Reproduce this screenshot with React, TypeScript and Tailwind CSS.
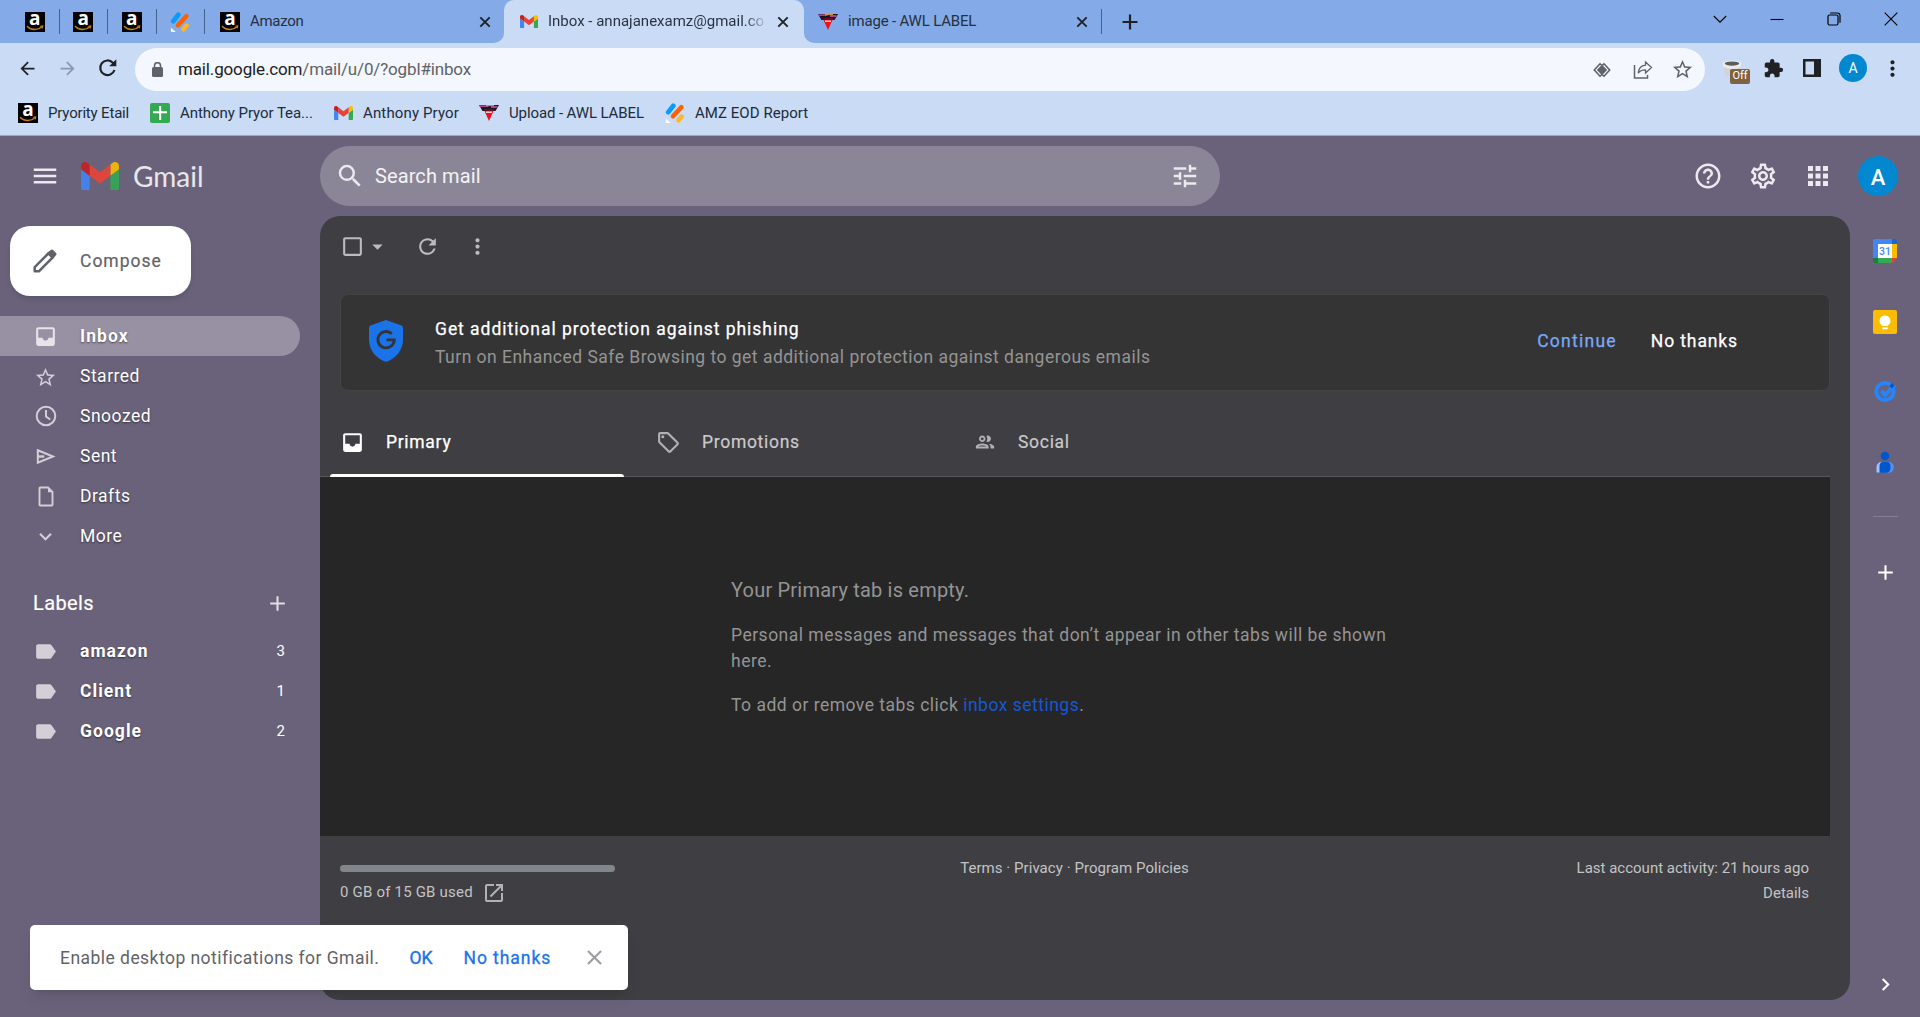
import type { ReactNode } from "react";
import {
  MdAdd,
  MdApps,
  MdArrowBack,
  MdArrowDropDown,
  MdArrowForward,
  MdCheckBoxOutlineBlank,
  MdChevronRight,
  MdClose,
  MdExtension,
  MdHelpOutline,
  MdKeyboardArrowDown,
  MdLabel,
  MdMenu,
  MdMoreVert,
  MdOpenInNew,
  MdOutlineGroup,
  MdOutlineLocalOffer,
  MdOutlineSettings,
  MdRefresh,
  MdSearch,
  MdStarBorder,
  MdTune,
} from "react-icons/md";

function AmazonIcon() {
  return (
    <span className="relative flex h-5 w-5 shrink-0 justify-center bg-black font-['Open_Sans',sans-serif] text-[19px] leading-[13px] font-bold text-white">
      a
      <svg className="absolute inset-0" width="20" height="20" viewBox="0 0 20 20" fill="none">
        <path d="M2 14.2c4.600 4.400 10.800 4.400 15 .6" stroke="#c77e1c" strokeWidth="1.500" />
        <path d="M15.200 14.200l2.600-.3-.6 2.500" stroke="#c77e1c" strokeWidth="1.100" />
      </svg>
    </span>
  );
}

function JotformIcon() {
  return (
    <svg className="shrink-0" width="20" height="20" viewBox="0 0 20 20" strokeLinecap="round">
      <path d="M3.200 9.200L8.300 2.800" stroke="#0a99ff" strokeWidth="4.600" />
      <path d="M8 13.200l8.300-8.900" stroke="#ff6100" strokeWidth="4.600" />
      <path d="M13.500 17.200l3-3.600" stroke="#ffb629" strokeWidth="4.600" />
      <path d="M.8 15.500l4.900 4.500H1.800a1 1 0 0 1-1-1z" fill="#fff" />
    </svg>
  );
}

function GmailIcon({ width }: { width: number }) {
  return (
    <svg className="shrink-0" width={width} height={width * 0.75} viewBox="52 42 88 66">
      <path fill="#4285f4" d="M58 108h14V74L52 59v43c0 3.320 2.690 6 6 6" />
      <path fill="#34a853" d="M120 108h14c3.320 0 6-2.690 6-6V59l-20 15" />
      <path fill="#fbbc04" d="M120 48v26l20-15v-8c0-7.420-8.470-11.650-14.400-7.200" />
      <path fill="#ea4335" d="M72 74V48l24 18 24-18v26L96 92" />
      <path fill="#c5221f" d="M52 51v8l20 15V48l-5.600-4.200c-5.940-4.450-14.400-.22-14.400 7.200" />
    </svg>
  );
}

function SheetsIcon() {
  return (
    <svg className="shrink-0" width="20" height="20" viewBox="0 0 20 20">
      <rect width="20" height="20" rx="2" fill="#34a853" />
      <path d="M9 3h2.200v5.300H17v2H11.200V17H9v-6.700H3v-2h6z" fill="#fff" />
    </svg>
  );
}

function AwlIcon() {
  return (
    <svg className="shrink-0" width="20" height="20" viewBox="0 0 20 20">
      <path d="M0 2h20l-3.500 6h-13z" fill="#1b1226" />
      <path d="M.5 3.200h9M12 4h6.500" stroke="#d957a8" strokeWidth="1.300" />
      <path d="M7 2.600h8" stroke="#e8a13a" strokeWidth="1" />
      <path d="M4.600 6h10.800L10 18z" fill="#f0101c" />
      <path d="M4 6.200h12l-1 1.600H5z" fill="#33131c" />
      <path d="M7 9.200h6" stroke="#fbd5d5" strokeWidth="1.400" />
    </svg>
  );
}

function InboxIcon() {
  return (
    <svg width="25" height="25" viewBox="0 0 24 24" fill="currentColor">
      <path
        fillRule="evenodd"
        d="M5 3h14a2 2 0 0 1 2 2v14a2 2 0 0 1-2 2H5a2 2 0 0 1-2-2V5c0-1.100.9-2 2-2zm0 2v8.300h4.200c0 1.600 1.300 2.700 2.800 2.700s2.800-1.100 2.800-2.700H19V5z"
      />
    </svg>
  );
}

function PinnedTab({ children }: { children: ReactNode }) {
  return (
    <div className="flex h-[25px] w-[48.500px] items-center justify-center border-r border-[#44618f]">
      {children}
    </div>
  );
}

function TabClose() {
  return (
    <svg width="12" height="12" viewBox="0 0 12 12" stroke="#202124" strokeWidth="1.900">
      <path d="M1.300 1.300l9.400 9.400M10.700 1.300l-9.400 9.400" />
    </svg>
  );
}

function TabStrip() {
  return (
    <div className="flex h-[43px] bg-[#cadbf6] text-[15px] text-[#26303f]">
      <div className="flex w-[504px] items-center rounded-br-[10px] bg-[#84abe8] pl-[11px]">
        <PinnedTab><AmazonIcon /></PinnedTab>
        <PinnedTab><AmazonIcon /></PinnedTab>
        <PinnedTab><AmazonIcon /></PinnedTab>
        <PinnedTab><JotformIcon /></PinnedTab>
        <div className="ml-[15px] flex flex-1 items-center pr-[13px]">
          <AmazonIcon />
          <span className="ml-[10px] flex-1 tracking-[-0.300px]">Amazon</span>
          <TabClose />
        </div>
      </div>
      <div className="w-[300px] bg-linear-to-b from-[#84abe8] from-50% to-[#cadbf6] to-50%">
        <div className="flex h-full items-center rounded-t-[10px] bg-[#cadbf6] pr-[15px] pl-[16px]">
          <GmailIcon width={18} />
          <span className="ml-[10px] w-[219px] bg-linear-to-r from-[#26303f] from-90% to-[#cadbf6] bg-clip-text whitespace-nowrap text-transparent">
            Inbox - annajanexamz@gmail.co
          </span>
          <span className="ml-auto"><TabClose /></span>
        </div>
      </div>
      <div className="flex flex-1 items-center rounded-bl-[10px] bg-[#84abe8] pl-[14px]">
        <div className="flex h-[25px] w-[284px] items-center border-r border-[#44618f] pr-[13px]">
          <AwlIcon />
          <span className="ml-[10px] flex-1 tracking-[-0.180px]">image - AWL LABEL</span>
          <TabClose />
        </div>
        <svg className="ml-5" width="16" height="16" viewBox="0 0 16 16" stroke="#202124" strokeWidth="2.200">
          <path d="M8 .5v15M.5 8h15" />
        </svg>
        <div className="mr-[22px] mb-[6px] ml-auto flex items-center gap-[43px]">
          <svg width="14" height="14" viewBox="0 0 14 14" fill="none" stroke="#000" strokeWidth="1.100">
            <path d="M.8 4l6.200 6.200L13.200 4" />
          </svg>
          <svg width="14" height="14" viewBox="0 0 14 14" stroke="#000" strokeWidth="1.100">
            <path d="M.5 7.500h13" />
          </svg>
          <svg width="14" height="14" viewBox="0 0 14 14" fill="none" stroke="#000" strokeWidth="1.200">
            <rect x="1" y="3" width="10" height="10" rx="1.500" />
            <path d="M3.200 1h7.300A2.500 2.500 0 0 1 13 3.500v7.300" />
          </svg>
          <svg width="14" height="14" viewBox="0 0 14 14" stroke="#000" strokeWidth="1.100">
            <path d="M.7.7l12.600 12.600M13.300.7L.7 13.300" />
          </svg>
        </div>
      </div>
    </div>
  );
}

function AddressBar() {
  return (
    <div className="flex h-12 items-center pt-[2px] text-[#202124]">
      <MdArrowBack className="ml-[17px] size-[21px]" />
      <MdArrowForward className="ml-[19px] size-[21px] text-[#8b98ad]" />
      <svg className="ml-[20px]" width="20" height="20" viewBox="0 0 20 20" fill="none">
        <path d="M16.500 12a7.300 7.300 0 1 1-1.700-7.300L17 7" stroke="#202124" strokeWidth="2.200" />
        <path d="M18.300 1.200v7.100h-7.100z" fill="#202124" />
      </svg>
      <div className="mt-[3px] ml-[17px] flex h-[43px] w-[1570px] items-center rounded-full bg-[#f4f7fd] text-[17px] text-[#5f6368]">
        <svg className="ml-[17px]" width="11" height="15" viewBox="0 0 11 15">
          <rect y="5" width="11" height="10" rx="1.500" fill="#5f6368" />
          <path d="M2.500 6V3.700a3 3 0 0 1 6 0V6" fill="none" stroke="#5f6368" strokeWidth="1.500" />
        </svg>
        <span className="ml-[15px] tracking-[-0.150px]">
          <span className="text-[#202124]">mail.google.com</span>/mail/u/0/?ogbl#inbox
        </span>
        <svg className="ml-auto" width="18" height="18" viewBox="0 0 18 18" fill="none" stroke="#5f6368" strokeWidth="1.600">
          <path d="M9 3.800L14.200 9 9 14.200 3.800 9z" fill="#5f6368" stroke="none" />
          <path d="M9 4.500L7 2.800 1.300 9 7 15.200l2-1.700M9 4.500l2-1.700L16.700 9 11 15.200l-2-1.700" />
        </svg>
        <svg className="ml-[22px]" width="20" height="20" viewBox="0 0 20 20" fill="none" stroke="#5f6368" strokeWidth="1.500">
          <path d="M1.500 5v13h13v-3" />
          <path d="M12.500 2l6 5.500-6 5.500V9.800C9 9.800 6.500 11 5.300 13.300 5.500 9 8 5.700 12.500 5.200z" strokeWidth="1.300" />
        </svg>
        <MdStarBorder className="mr-[11px] ml-[18px] size-[23px]" />
      </div>
      <div className="relative ml-[16px] h-[18px] w-[29px]">
        <svg width="22" height="20" viewBox="0 0 22 22">
          <path d="M2 8l2 11h14l2-11z" fill="#d3d3d3" />
          <path d="M1 5v3c3 4 17 4 20 0V5z" fill="#e9e9e9" />
          <ellipse cx="11" cy="5" rx="10.300" ry="3.300" fill="#ececec" />
          <ellipse cx="11" cy="5" rx="8" ry="2.300" fill="#5b5b5b" />
        </svg>
        <span className="absolute top-[10px] left-[9px] flex h-[15px] w-[20px] items-center justify-center rounded-[2px] bg-[#7d6341] text-[11px] text-white">
          Off
        </span>
      </div>
      <MdExtension className="ml-[13px] size-[21px]" />
      <svg className="ml-[19px]" width="18" height="18" viewBox="0 0 18 18">
        <path d="M0 0h18v18H0zm2.500 2.500v13h8.500v-13z" fill="#202124" fillRule="evenodd" />
      </svg>
      <span className="ml-[18px] flex size-7 items-center justify-center rounded-full bg-[#0288d1] text-sm text-white">A</span>
      <MdMoreVert className="ml-[13px] size-[25px]" />
    </div>
  );
}

function Bookmark({ icon, className, children }: { icon: ReactNode; className: string; children: ReactNode }) {
  return (
    <span className={`flex shrink-0 items-center gap-[10px] whitespace-nowrap ${className}`}>
      {icon}
      {children}
    </span>
  );
}

function Bookmarks() {
  return (
    <div className="flex h-[45px] items-center border-b border-[#94a9c8] pl-[18px] text-[15px] text-[#202b3b]">
      <Bookmark icon={<AmazonIcon />} className="w-[132px] tracking-[-0.180px]">Pryority Etail</Bookmark>
      <Bookmark icon={<SheetsIcon />} className="w-[184px] tracking-[-0.050px]">Anthony Pryor Tea...</Bookmark>
      <Bookmark icon={<GmailIcon width={19} />} className="w-[145px] tracking-[0.140px]">Anthony Pryor</Bookmark>
      <Bookmark icon={<AwlIcon />} className="w-[186px] tracking-[-0.110px]">Upload - AWL LABEL</Bookmark>
      <Bookmark icon={<JotformIcon />} className="tracking-[0.050px]">AMZ EOD Report</Bookmark>
    </div>
  );
}

function Header() {
  return (
    <header className="flex h-20 items-center text-[#eceaee]">
      <div className="flex w-80 items-center pl-[30px]">
        <MdMenu className="size-[30px]" />
        <span className="ml-[21px] opacity-90"><GmailIcon width={38} /></span>
        <span className="ml-[14px] font-[Lato,sans-serif] text-[28px] text-white/85">Gmail</span>
      </div>
      <div className="flex h-[60px] w-[900px] items-center rounded-full bg-[#8a8697] pr-5 pl-[15px]">
        <MdSearch className="size-[30px]" />
        <span className="ml-[10px] flex-1 text-xl tracking-[0.100px] text-[#f4f3f5]">Search mail</span>
        <MdTune className="size-[30px]" />
      </div>
      <div className="mr-[22px] ml-auto flex items-center gap-[25px]">
        <MdHelpOutline className="size-[30px]" />
        <MdOutlineSettings className="size-[30px]" />
        <MdApps className="size-[30px]" />
        <span className="flex size-10 items-center justify-center rounded-full bg-[#0288d1] pt-[2px] text-[22px] font-medium text-white">A</span>
      </div>
    </header>
  );
}

function NavItem({ icon, label, count, active, bold }: { icon: ReactNode; label: string; count?: number; active?: boolean; bold?: boolean }) {
  return (
    <div className={`flex h-10 w-[300px] items-center rounded-r-full pr-[15px] pl-[33px] ${active ? "bg-[#9890a3]" : ""}`}>
      <span className="flex w-[25px] justify-center text-[#d2cfd6]">{icon}</span>
      <span className={`ml-[22px] flex-1 text-shadow-[0_1px_2px_rgb(0_0_0_/_0.500)] ${bold ? "font-bold tracking-[1.050px]" : "tracking-[0.500px]"}`}>
        {label}
      </span>
      {count && <span className="text-[15px]">{count}</span>}
    </div>
  );
}

function ClockIcon() {
  return (
    <svg width="22" height="22" viewBox="0 0 22 22" fill="none" stroke="currentColor" strokeWidth="2">
      <circle cx="11" cy="11" r="9.300" />
      <path d="M11 5v6.500l4.200 3" />
    </svg>
  );
}

function SendIcon() {
  return (
    <svg width="20" height="17" viewBox="0 0 20 17" fill="none" stroke="currentColor" strokeWidth="2">
      <path d="M1.800 2.300L17 8.500 1.800 14.700z" />
      <path d="M1.800 8.500h6.500" strokeWidth="2.400" />
    </svg>
  );
}

function DraftIcon() {
  return (
    <svg width="16" height="21" viewBox="0 0 16 21" fill="none" stroke="currentColor" strokeWidth="1.900">
      <path d="M10 1.500H2.300a.8.8 0 0 0-.8.8v16.400a.8.8 0 0 0 .8.8h11.400a.8.8 0 0 0 .8-.8V6z" />
      <path d="M10 1v5.200h5z" fill="currentColor" stroke="none" />
    </svg>
  );
}

function Sidebar() {
  return (
    <aside className="w-80 pt-[10px] text-[17.500px] text-white">
      <button className="ml-[10px] flex h-[70px] w-[181px] items-center rounded-[20px] bg-white pl-[23px] text-[#5f6368] shadow-md">
        <svg width="24" height="24" viewBox="0 0 24 24" fill="none">
          <path d="M1.700 22.300v-4.200L15.800 4l4.200 4.200L5.900 22.300z" stroke="#5f6368" strokeWidth="2.500" strokeLinejoin="round" />
          <path d="M13.700 4.500L17.700 1c.7-.7 1.700-.7 2.400 0l2.900 2.900c.7.7.7 1.700 0 2.400l-3.500 4z" fill="#5f6368" />
        </svg>
        <span className="ml-[23px] tracking-[1px] [-webkit-text-stroke:0.200px_#5f6368]">Compose</span>
      </button>
      <nav className="mt-5">
        <NavItem icon={<span className="text-[#e6e3e9]"><InboxIcon /></span>} label="Inbox" active bold />
        <NavItem icon={<MdStarBorder className="mt-[2px] size-[23px]" />} label="Starred" />
        <NavItem icon={<ClockIcon />} label="Snoozed" />
        <NavItem icon={<SendIcon />} label="Sent" />
        <NavItem icon={<DraftIcon />} label="Drafts" />
        <NavItem icon={<MdKeyboardArrowDown className="size-[25px]" />} label="More" />
      </nav>
      <div className="mt-[27px] mb-2 flex h-10 w-[290px] items-center justify-between pl-[33px]">
        <h3 className="text-xl tracking-[0.400px] [-webkit-text-stroke:0.200px_white]">Labels</h3>
        <MdAdd className="size-[25px] text-[#e0dee3]" />
      </div>
      <NavItem icon={<MdLabel className="size-[25px]" />} label="amazon" count={3} bold />
      <NavItem icon={<MdLabel className="size-[25px]" />} label="Client" count={1} bold />
      <NavItem icon={<MdLabel className="size-[25px]" />} label="Google" count={2} bold />
    </aside>
  );
}

function PhishingBanner() {
  return (
    <div className="mt-[17px] mr-5 ml-[20px] flex h-[97px] items-center rounded-lg border border-[#434343] bg-[#343434] pb-[3px] pl-[27px] text-white">
      <svg width="36" height="42" viewBox="0 0 36 42">
        <path d="M18 0l15.500 5.500Q35 6 35 8v11.500C35 30 28 38.500 18 42 8 38.500 1 30 1 19.500V8q0-2 1.500-2.500z" fill="#1a73e8" />
        <path d="M23.800 13.800A8.200 8.200 0 1 0 26.300 19.800H18.500" fill="none" stroke="#343434" strokeWidth="2.800" />
      </svg>
      <div className="mt-[3px] ml-[31px] leading-7">
        <div className="tracking-[0.960px] [-webkit-text-stroke:0.250px_white]">Get additional protection against phishing</div>
        <div className="tracking-[0.480px] text-[#949494]">
          Turn on Enhanced Safe Browsing to get additional protection against dangerous emails
        </div>
      </div>
      <span className="ml-auto tracking-[1.250px] text-[#7baaf7] [-webkit-text-stroke:0.250px_#7baaf7]">Continue</span>
      <span className="mr-[91px] ml-[34px] tracking-[0.880px] [-webkit-text-stroke:0.250px_white]">No thanks</span>
    </div>
  );
}

function CategoryTabs() {
  return (
    <div className="mt-[17px] mr-5 flex h-[69px] items-center border-b border-[#59595d] pl-[10px] tracking-[0.700px] text-[#cacacc]">
      <div className="relative flex h-full w-[316px] items-center pl-[10px] text-white">
        <InboxIcon />
        <span className="ml-[21px] [-webkit-text-stroke:0.250px_white]">Primary</span>
        <span className="absolute bottom-[-1px] left-0 h-[3px] w-[294px] rounded-t-sm bg-white" />
      </div>
      <div className="flex w-[316px] items-center pl-[10px]">
        <MdOutlineLocalOffer className="size-[25px] text-[#b2b2b4]" />
        <span className="ml-[21px] [-webkit-text-stroke:0.200px_#cacacc]">Promotions</span>
      </div>
      <div className="flex w-[316px] items-center pl-[12px]">
        <MdOutlineGroup className="size-[22px] text-[#b2b2b4]" />
        <span className="ml-[22px] [-webkit-text-stroke:0.200px_#cacacc]">Social</span>
      </div>
    </div>
  );
}

function MailPanel() {
  return (
    <main className="h-[784px] w-[1530px] overflow-hidden rounded-[20px] bg-[#3f3e42] text-[17.500px]">
      <div className="flex h-[61px] items-center pl-5 text-[#bcbcbe]">
        <MdCheckBoxOutlineBlank className="size-[25px]" />
        <MdArrowDropDown className="size-[25px]" />
        <MdRefresh className="ml-[25px] size-[25px]" />
        <MdMoreVert className="ml-[25px] size-[25px]" />
      </div>
      <PhishingBanner />
      <CategoryTabs />
      <div className="mr-5 h-[359px] bg-[#262626] pt-[100px] pl-[411px] leading-[26px] tracking-[0.490px] text-[#949494]">
        <p className="text-xl leading-[26px] tracking-[0.200px]">Your Primary tab is empty.</p>
        <p className="mt-[19px] w-[672px]">
          Personal messages and messages that don’t appear in other tabs will be shown here.
        </p>
        <p className="mt-[18px]">
          To add or remove tabs click <a className="text-[#1558d6]">inbox settings</a>.
        </p>
      </div>
      <footer className="mr-[41px] ml-5 grid grid-cols-3 pt-5 text-[15px] leading-[25px] text-[#c3c3c5]">
        <div>
          <div className="mt-[9px] h-[7px] w-[275px] rounded-full bg-[#80868b]" />
          <div className="mt-[8px] flex items-center tracking-[0.200px]">
            0 GB of 15 GB used
            <MdOpenInNew className="ml-[9px] size-6 text-[#b2b2b4]" />
          </div>
        </div>
        <div className="text-center tracking-[0.050px]">Terms · Privacy · Program Policies</div>
        <div className="text-right">
          Last account activity: 21 hours ago
          <div>Details</div>
        </div>
      </footer>
    </main>
  );
}

function CalendarIcon() {
  return (
    <svg width="24" height="24" viewBox="0 0 24 24">
      <path d="M2 0h17v5H5v14H0V2a2 2 0 0 1 2-2z" fill="#4285f4" />
      <path d="M19 0h3a2 2 0 0 1 2 2v3h-5z" fill="#1967d2" />
      <path d="M19 5h5v14h-5z" fill="#fbbc04" />
      <path d="M5 19h14v5H5z" fill="#34a853" />
      <path d="M0 19h5v5H2a2 2 0 0 1-2-2z" fill="#188038" />
      <path d="M19 19h5l-5 5z" fill="#ea4335" />
      <path d="M5 5h14v14H5z" fill="#fff" />
      <text x="12" y="16" textAnchor="middle" fontSize="10.500" fontWeight="500" fill="#4285f4">31</text>
    </svg>
  );
}

function KeepIcon() {
  return (
    <svg width="24" height="24" viewBox="0 0 24 24">
      <rect width="24" height="24" rx="2" fill="#fbbc04" />
      <path d="M12 5.500a5.400 5.400 0 0 0-3 9.900V16h6v-.6a5.400 5.400 0 0 0-3-9.900zM9.300 17.300h5.400v1.900H9.300z" fill="#fff" />
    </svg>
  );
}

function TasksIcon() {
  return (
    <svg width="24" height="24" viewBox="0 0 24 24" fill="none">
      <circle cx="12" cy="12.500" r="8.700" stroke="#2684fc" strokeWidth="3.800" />
      <path d="M8.300 12l4 3.800 9.200-9.800" stroke="#2684fc" strokeWidth="4" />
      <path d="M19 4l2.500 2.500L19 9.500l-2.500-2.600z" fill="#0057cc" />
    </svg>
  );
}

function ContactsIcon() {
  return (
    <svg width="24" height="24" viewBox="0 0 24 24">
      <path d="M3.500 22.500V17a5 5 0 0 1 5-5V22.500z" fill="#a0c2ff" />
      <path d="M12 12h4a4.700 4.700 0 0 1 4.700 4.700V18a4.700 4.700 0 0 1-4.700 4.700h-4z" fill="#5491f5" />
      <path d="M6.500 22.700V16a4 4 0 0 1 4-4h3a4 4 0 0 1 4 4v2.500a4.200 4.200 0 0 1-4.200 4.200z" fill="#0057cc" />
      <circle cx="12" cy="6" r="4.300" fill="#0057cc" />
    </svg>
  );
}

function SidePanel() {
  return (
    <aside className="flex w-[70px] flex-col items-center text-white">
      <span className="flex h-[70px] items-center"><CalendarIcon /></span>
      <span className="flex h-[70px] items-center pt-[2px]"><KeepIcon /></span>
      <span className="flex h-[70px] items-center"><TasksIcon /></span>
      <span className="flex h-[70px] items-center pt-[2px]"><ContactsIcon /></span>
      <span className="mt-5 h-px w-[25px] bg-[#857e92]" />
      <MdAdd className="mt-[43px] size-[25px]" />
      <MdChevronRight className="mt-auto mb-[20px] size-[25px]" />
    </aside>
  );
}

function Toast() {
  return (
    <div className="absolute bottom-[27px] left-[30px] flex h-[65px] w-[598px] items-center rounded-[5px] bg-white pl-[30px] text-[17.500px] text-[#5f6368] shadow-lg">
      <span className="mt-[2px] tracking-[0.460px] whitespace-nowrap">Enable desktop notifications for Gmail.</span>
      <span className="mt-[2px] ml-[30px] text-[#1a73e8] [-webkit-text-stroke:0.400px_#1a73e8]">OK</span>
      <span className="mt-[2px] ml-[31px] tracking-[0.950px] whitespace-nowrap text-[#1a73e8] [-webkit-text-stroke:0.300px_#1a73e8]">
        No thanks
      </span>
      <MdClose className="ml-auto mr-[21px] size-[25px] text-[#9a9da1]" />
    </div>
  );
}

export default function App() {
  return (
    <div className="relative h-[1017px] w-[1920px] overflow-hidden bg-[#6a627a] font-[Roboto,sans-serif]">
      <div className="h-[136px] bg-[#cadbf6]">
        <TabStrip />
        <AddressBar />
        <Bookmarks />
      </div>
      <Header />
      <div className="flex h-[801px]">
        <Sidebar />
        <MailPanel />
        <SidePanel />
      </div>
      <Toast />
    </div>
  );
}
